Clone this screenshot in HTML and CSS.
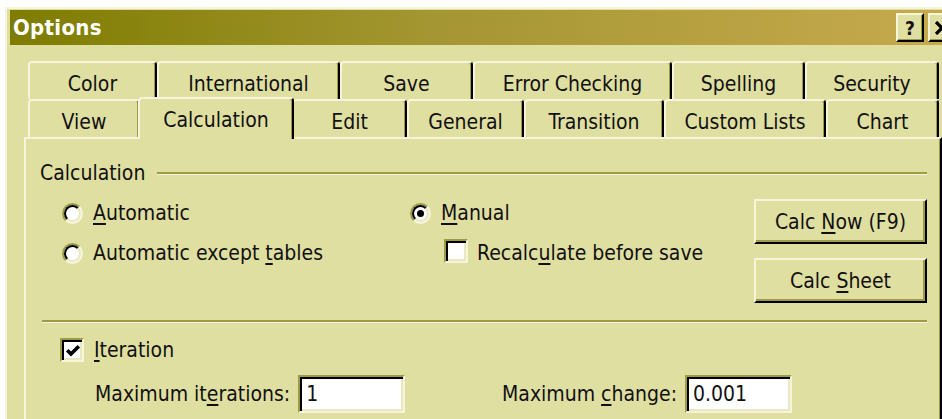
FILE: index.html
```html
<!DOCTYPE html>
<html lang="en">
<head>
<meta charset="utf-8">
<title>Options</title>
<link rel="stylesheet" href="styles.css">
</head>
<body>
<div class="dialog">
  <div class="titlebar">
    <span class="title">Options</span>
    <div class="caption-buttons">
      <span class="cap-btn cap-help">?</span>
      <span class="cap-btn cap-close">
        <svg width="16" height="14" viewBox="0 0 16 14"><path d="M2 1 L14 13 M14 1 L2 13" stroke="#000" stroke-width="3.2" fill="none"/></svg>
      </span>
    </div>
  </div>

  <div class="client">
    <div class="tabs">
      <div class="tab-row back">
        <div class="tab">Color</div>
        <div class="tab">International</div>
        <div class="tab">Save</div>
        <div class="tab">Error Checking</div>
        <div class="tab">Spelling</div>
        <div class="tab">Security</div>
      </div>
      <div class="tab-row front">
        <div class="tab">View</div>
        <div class="tab selected">Calculation</div>
        <div class="tab">Edit</div>
        <div class="tab">General</div>
        <div class="tab">Transition</div>
        <div class="tab">Custom Lists</div>
        <div class="tab">Chart</div>
      </div>
    </div>

    <div class="panel">
      <div class="group-head">
        <span>Calculation</span>
        <span class="rule"></span>
      </div>

      <div class="calc-body">
        <div class="col col-a">
          <label class="option"><span class="radio"></span><span><u>A</u>utomatic</span></label>
          <label class="option"><span class="radio"></span><span>Automatic except <u>t</u>ables</span></label>
        </div>
        <div class="col col-b">
          <label class="option"><span class="radio checked"></span><span><u>M</u>anual</span></label>
          <label class="option sub"><span class="check"></span><span>Recalc<u>u</u>late before save</span></label>
        </div>
        <div class="col col-c">
          <span class="btn"><span>Calc <u>N</u>ow (F9)</span></span>
          <span class="btn"><span>Calc <u>S</u>heet</span></span>
        </div>
      </div>

      <div class="rule separator"></div>

      <label class="option iteration">
        <span class="check checked">
          <svg width="16" height="16" viewBox="0 0 16 16"><path d="M2.2 7.2 L6 11 L13.8 3.2" stroke="#000" stroke-width="3.6" fill="none"/></svg>
        </span>
        <span><u>I</u>teration</span>
      </label>

      <div class="fields">
        <div class="field field-iter">
          <span>Maximum it<u>e</u>rations:</span>
          <span class="input">1</span>
        </div>
        <div class="field">
          <span>Maximum <u>c</u>hange:</span>
          <span class="input">0.001</span>
        </div>
      </div>
    </div>
  </div>
</div>
</body>
</html>
```
FILE: styles.css
```css
:root {
  --face: #e0dfa2;
  --hl: #f6f5dc;
  --light: #e9e8c0;
  --shadow: #9d9b48;
  --dark: #000;
}

html, body {
  margin: 0;
  background: #fff;
  overflow: hidden;
  width: 942px;
  height: 419px;
}

body {
  font-family: "DejaVu Sans Condensed", "DejaVu Sans", sans-serif;
  font-stretch: semi-condensed;
  font-size: 21px;
  line-height: 24px;
  color: #111;
}

u { text-decoration-thickness: 2px; text-underline-offset: 3px; }

/* window frame */
.dialog {
  box-sizing: border-box;
  width: 950px;
  height: 420px;
  margin: 7px 0 0 5px;
  padding: 1px 5px 0 3px;
  background: var(--face);
  border-top: 2px solid var(--hl);
  border-left: 2px solid var(--hl);
}

/* caption */
.titlebar {
  height: 35px;
  display: flex;
  align-items: center;
  justify-content: space-between;
  padding: 0 0 0 3px;
  background: linear-gradient(to right, #7e7c00 0%, #a49632 45%, #c7aa4e 100%);
}

.title {
  color: #fff;
  font-weight: bold;
  font-size: 22px;
  letter-spacing: 0.3px;
}

.caption-buttons {
  display: flex;
  gap: 4px;
  margin-right: -6px;
}

.cap-btn {
  box-sizing: border-box;
  width: 28px;
  height: 29px;
  display: flex;
  align-items: center;
  justify-content: center;
  background: var(--face);
  border: 2px solid;
  border-color: var(--hl) var(--dark) var(--dark) var(--hl);
  box-shadow: inset -1px -1px 0 var(--shadow);
  font-family: "DejaVu Sans", sans-serif;
  font-weight: bold;
  font-size: 19px;
}

/* tabs */
.client {
  padding: 16px 0 0 14px;
}

.tabs {
  margin-left: 4px;
  width: 911px;
}

.tab-row {
  display: grid;
  height: 38px;
}

.tab-row.back {
  grid-template-columns: 129px 183px 133px 199px 133px 134px;
}

.tab-row.front {
  grid-template-columns: 112px 152px 115px 117px 140px 162px 113px;
}

.tab {
  box-sizing: border-box;
  background: var(--face);
  border-top: 2px solid var(--hl);
  border-left: 2px solid var(--hl);
  border-right: 2px solid var(--dark);
  border-radius: 4px 4px 0 0;
  box-shadow: inset -1px 0 0 var(--shadow);
  padding-top: 9px;
  text-align: center;
  white-space: nowrap;
}

.tab.selected {
  position: relative;
  z-index: 2;
  margin: -2px -2px -2px -2px;
}

/* page panel */
.panel {
  box-sizing: border-box;
  width: 918px;
  height: 300px;
  border-top: 2px solid var(--hl);
  border-left: 2px solid var(--hl);
  border-right: 2px solid var(--dark);
  box-shadow: inset -1px 0 0 var(--shadow);
  padding: 22px 13px 0 14px;
}

.group-head {
  display: flex;
  align-items: center;
  height: 24px;
}

.rule {
  display: block;
  height: 2px;
  background: var(--shadow);
  border-bottom: 1px solid var(--hl);
}

.group-head .rule {
  flex: 1;
  margin-left: 12px;
}

.calc-body {
  display: flex;
  margin-top: 14px;
  padding-left: 22px;
}

.col {
  display: flex;
  flex-direction: column;
}

.col-a {
  width: 348px;
  padding-top: 2px;
  gap: 16px;
}

.col-b {
  flex: 1;
  padding-top: 2px;
  gap: 16px;
}

.col-c {
  width: 173px;
  gap: 14px;
}

.option {
  display: flex;
  align-items: center;
  height: 24px;
  gap: 10px;
  white-space: nowrap;
}

.option.sub {
  margin-left: 34px;
  gap: 9px;
}

/* radio button */
.radio {
  position: relative;
  box-sizing: border-box;
  flex: none;
  width: 21px;
  height: 21px;
  border-radius: 50%;
  border: 2px solid;
  border-color: var(--shadow) var(--hl) var(--hl) var(--shadow);
  background: #fff;
}

.radio::before {
  content: "";
  position: absolute;
  inset: 0;
  border-radius: 50%;
  border: 2px solid;
  border-color: var(--dark) var(--light) var(--light) var(--dark);
}

.radio.checked::after {
  content: "";
  position: absolute;
  left: 5px;
  top: 5px;
  width: 7px;
  height: 7px;
  border-radius: 50%;
  background: #000;
}

/* check box */
.check {
  box-sizing: border-box;
  flex: none;
  width: 24px;
  height: 24px;
  border: 2px solid;
  border-color: var(--shadow) var(--hl) var(--hl) var(--shadow);
  box-shadow: inset 2px 2px 0 var(--dark), inset -2px -2px 0 var(--light);
  background: #fff;
  margin-bottom: 4px;
  display: flex;
  align-items: center;
  justify-content: center;
}

.check svg { display: block; margin: 1px 0 0 1px; }

/* push buttons */
.btn {
  box-sizing: border-box;
  height: 45px;
  display: flex;
  align-items: center;
  justify-content: center;
  background: var(--face);
  border: 2px solid;
  border-color: var(--hl) var(--dark) var(--dark) var(--hl);
  box-shadow: inset -2px -2px 0 var(--shadow);
  white-space: nowrap;
}

.separator {
  margin: 17px 0 0 2px;
}

.option.iteration {
  margin: 15px 0 0 20px;
  gap: 10px;
}

.option.iteration .check { margin-bottom: 0; }

/* number fields */
.fields {
  display: flex;
  margin: 13px 0 0 55px;
}

.field {
  display: flex;
  align-items: center;
  gap: 8px;
  white-space: nowrap;
}

.field-iter {
  width: 407px;
}

.input {
  box-sizing: border-box;
  width: 107px;
  height: 38px;
  display: flex;
  align-items: center;
  padding-left: 6px;
  background: #fff;
  border: 2px solid;
  border-color: var(--shadow) var(--hl) var(--hl) var(--shadow);
  box-shadow: inset 2px 2px 0 var(--dark), inset -2px -2px 0 var(--light);
}
```
